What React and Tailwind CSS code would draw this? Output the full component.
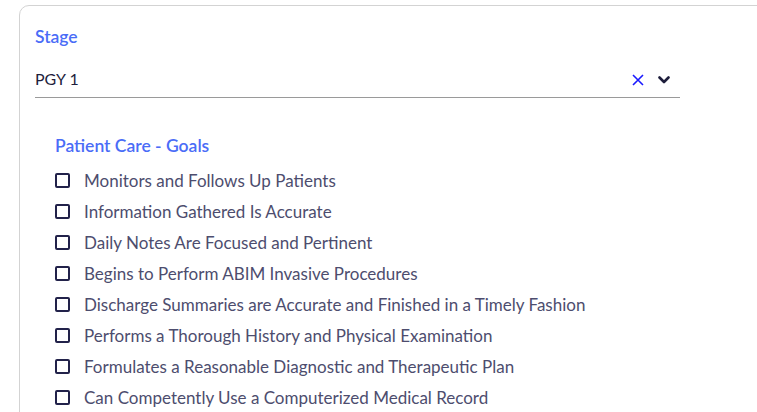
import React from 'react';

const goals = [
  'Monitors and Follows Up Patients',
  'Information Gathered Is Accurate',
  'Daily Notes Are Focused and Pertinent',
  'Begins to Perform ABIM Invasive Procedures',
  'Discharge Summaries are Accurate and Finished in a Timely Fashion',
  'Performs a Thorough History and Physical Examination',
  'Formulates a Reasonable Diagnostic and Therapeutic Plan',
  'Can Competently Use a Computerized Medical Record',
];

const App = () => {
  return (
    <div className="w-[757px] h-[412px] overflow-hidden bg-white pt-[5px] pl-[19px]" style={{ fontFamily: 'Lato, "Noto Sans", sans-serif' }}>
      <div className="w-[800px] h-[600px] border border-[#d3d3d3] rounded-tl-[10px] pl-[15px] pt-[19px]">
        <label className="block text-[17.5px] leading-[24px] font-semibold text-[#4a6cf7]">Stage</label>
        <div className="w-[645px] mt-[17px] h-[32px] border-b border-[#9a9a9a] flex items-center justify-between">
          <span className="text-[16px] text-[#1e1e3c] -mt-[5px]">PGY 1</span>
          <div className="flex items-center gap-[14px] pr-[10px] -mt-[4px]">
            <svg width="12" height="12" viewBox="0 0 12 12" className="text-[#1a1aff]">
              <path d="M1 1 L11 11 M11 1 L1 11" stroke="currentColor" strokeWidth="1.6" fill="none" />
            </svg>
            <svg width="12" height="8" viewBox="0 0 12 8" className="text-[#1e1e3c]">
              <path d="M1.5 1.5 L6 6 L10.5 1.5" stroke="currentColor" strokeWidth="2.6" fill="none" strokeLinecap="round" strokeLinejoin="round" />
            </svg>
          </div>
        </div>
        <div className="pl-[20px] pt-[36px]">
          <h3 className="text-[17.5px] leading-[24px] font-semibold text-[#4a6cf7]">Patient Care - Goals</h3>
          <ul className="mt-[7px] flex flex-col">
            {goals.map(g => (
              <li key={g} className="flex items-center h-[31px] gap-[14px]">
                <span className="w-[15px] h-[15px] border-2 border-[#22224a] rounded-[2px] shrink-0" />
                <span className="text-[17px] text-[#4d4d6e]">{g}</span>
              </li>
            ))}
          </ul>
        </div>
      </div>
    </div>
  );
};

export default App;
